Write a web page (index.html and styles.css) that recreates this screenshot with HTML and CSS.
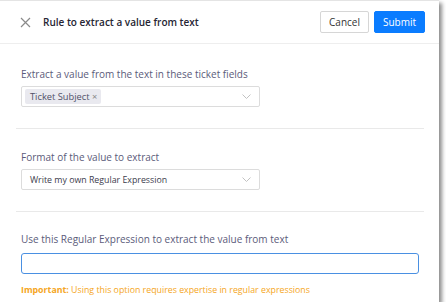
FILE: index.html
```html
<!DOCTYPE html>
<html>
<head>
  <meta charset="utf-8">
  <link rel="stylesheet" href="styles.css">
</head>
<body>
  <div class="dialog">
    <div class="header">
      <span class="close-icon">
        <svg width="11" height="11" viewBox="0 0 11 11"><path d="M1 1L10 10M10 1L1 10" stroke="#8a8a8a" stroke-width="1.2" fill="none"/></svg>
      </span>
      <h1>Rule to extract a value from text</h1>
      <button class="cancel-button">Cancel</button>
      <button class="submit-button">Submit</button>
    </div>

    <div class="section first">
      <div class="field-label">Extract a value from the text in these ticket fields</div>
      <div class="select-box">
        <span class="tag">Ticket Subject <span class="tag-x">×</span></span>
        <svg class="chevron" width="9" height="6" viewBox="0 0 9 6"><path d="M0.5 0.5L4.5 4.5L8.5 0.5" stroke="#c2c2c2" fill="none"/></svg>
      </div>
    </div>

    <div class="section">
      <div class="field-label">Format of the value to extract</div>
      <div class="select-box">
        <span class="select-value">Write my own Regular Expression</span>
        <svg class="chevron" width="9" height="6" viewBox="0 0 9 6"><path d="M0.5 0.5L4.5 4.5L8.5 0.5" stroke="#c2c2c2" fill="none"/></svg>
      </div>
    </div>

    <div class="section last">
      <div class="field-label">Use this Regular Expression to extract the value from text</div>
      <input class="text-input" type="text">
      <div class="warning"><b>Important:</b> Using this option requires expertise in regular expressions</div>
    </div>
  </div>
</body>
</html>
```

FILE: styles.css
```css
body {
  margin: 0;
  background: #fff;
  font-family: 'Open Sans', 'Noto Sans', sans-serif;
}

.dialog {
  width: 439px;
  height: 302px;
  box-sizing: border-box;
  background: #fff;
  border-top: 1px solid #e4e4e4;
  box-shadow: 3px 3px 4px rgba(0, 0, 0, 0.45);
}

.header {
  display: flex;
  align-items: center;
  height: 42px;
  padding: 0 14px 0 20px;
  border-bottom: 1px solid #eeeeee;
}

.close-icon {
  display: flex;
  margin-right: 12px;
}

.header h1 {
  flex: 1;
  margin: 0;
  font-size: 10px;
  font-weight: 600;
  color: #262633;
}

.cancel-button {
  width: 49px;
  height: 22px;
  padding: 0;
  margin-right: 5px;
  background: #fff;
  border: 1px solid #d6d6d6;
  border-radius: 2px;
  font-family: inherit;
  font-size: 10px;
  color: #333;
}

.submit-button {
  width: 51px;
  height: 22px;
  padding: 0;
  background: #0a7cff;
  border: 1px solid #0a7cff;
  border-radius: 2px;
  font-family: inherit;
  font-size: 10px;
  color: #fff;
}

.section {
  margin: 0 15px 0 16px;
  padding: 21px 5px 21px;
  border-bottom: 1px solid #e9e9e9;
}

.section.first {
  padding-top: 23px;
}

.section.last {
  border-bottom: none;
  padding-top: 20px;
  padding-right: 0;
}

.field-label {
  font-size: 10px;
  line-height: 14px;
  color: #5b5b7a;
  margin-bottom: 5px;
}

.section.last .field-label {
  margin-bottom: 7px;
}

.select-box {
  display: flex;
  align-items: center;
  width: 239px;
  height: 21px;
  box-sizing: border-box;
  border: 1px solid #dcdcdc;
  border-radius: 2px;
  padding: 0 8px 0 3px;
}

.tag {
  background: #e9e9ef;
  border-radius: 2px;
  padding: 0 4px 0 5px;
  font-size: 9.3px;
  line-height: 15px;
  color: #505068;
}

.tag-x {
  color: #888;
}

.select-value {
  font-size: 8.8px;
  color: #3c3c4c;
  padding-left: 5px;
}

.chevron {
  margin-left: auto;
}

.text-input {
  display: block;
  width: 398px;
  height: 21px;
  box-sizing: border-box;
  border: 1px solid #4a90e2;
  border-radius: 3px;
  margin-bottom: 10px;
}

.warning {
  font-size: 8.8px;
  line-height: 12px;
  color: #f5a623;
}

.warning b {
  font-weight: 700;
}
```
